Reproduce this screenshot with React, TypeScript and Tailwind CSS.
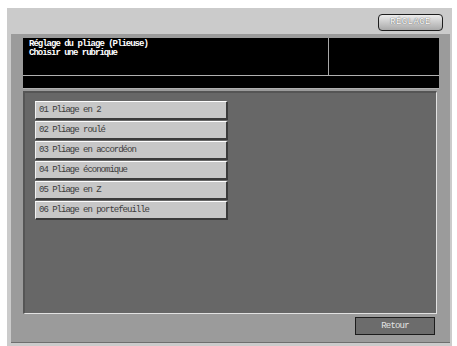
import React from "react";

const items = [
  "01 Pliage en 2",
  "02 Pliage roulé",
  "03 Pliage en accordéon",
  "04 Pliage économique",
  "05 Pliage en Z",
  "06 Pliage en portefeuille",
];

export default function App() {
  return (
    <div className="w-[457px] h-[346px] bg-white overflow-hidden pl-[7px] pt-[8px] pr-[5px] font-['Liberation_Mono',monospace]">
      <div className="h-[338px] bg-[#cbcbcb] flex flex-col">
        {/* top band */}
        <div className="h-[26px] flex justify-end items-start pt-[6px] pr-[9px] shrink-0">
          <div className="w-[65px] h-[17px] rounded-[4px] border-[1.5px] border-[#1e1e1e] bg-gradient-to-b from-[#ececec] to-[#a9a9a9] flex items-center justify-center">
            <span className="text-[9px] leading-none text-white tracking-[0.4px] [text-shadow:0_0_1px_#6a6a6a,0_0_1px_#6a6a6a]">RÉGLAGE</span>
          </div>
        </div>
        {/* frame */}
        <div className="ml-[4px] mr-[2px] h-[309px] bg-[#9b9b9b] border-b border-[#6e6e6e] pl-[12px] pr-[11px] pt-[4px] flex flex-col">
          <div className="h-[37px] bg-black flex shrink-0">
            <div className="w-[305px] pl-[6px] pt-[2px] text-white font-bold text-[9px] leading-[9px] tracking-[-1px]">
              <div>Réglage du pliage (Plieuse)</div>
              <div>Choisir une rubrique</div>
            </div>
            <div className="w-px bg-[#a8a8a8]" />
            <div className="flex-1" />
          </div>
          <div className="h-px bg-[#b0b0b0] shrink-0" />
          <div className="h-[12px] bg-black shrink-0" />
          <div className="h-px bg-[#b0b0b0] shrink-0" />
          <div className="h-[2px] shrink-0" />
          {/* panel */}
          <div className="w-[414px] h-[223px] bg-[#676767] border-t-2 border-l-2 border-t-[#555] border-l-[#555] border-b border-r border-b-[#e2e2e2] border-r-[#e2e2e2] pl-[10px] pt-[8px] flex flex-col gap-px shrink-0">
            {items.map((t) => (
              <div
                key={t}
                className="w-[193px] h-[19px] bg-[#c7c7c7] border-t border-l border-t-white border-l-[#f0f0f0] border-b-2 border-r-2 border-b-[#3a3a3a] border-r-[#3a3a3a] flex items-center pl-[3px] pt-[1px] text-[9px] leading-none text-[#3c3c3c] tracking-[-1px]"
              >
                {t}
              </div>
            ))}
          </div>
          <div className="flex justify-end pt-[3px] pr-[4px]">
            <div className="w-[80px] h-[18px] bg-[#6c6c6c] border border-[#1c1c1c] flex items-center justify-center text-[9px] leading-none text-[#e4e4e4] tracking-[-0.8px]">
              Retour
            </div>
          </div>
        </div>
      </div>
    </div>
  );
}
